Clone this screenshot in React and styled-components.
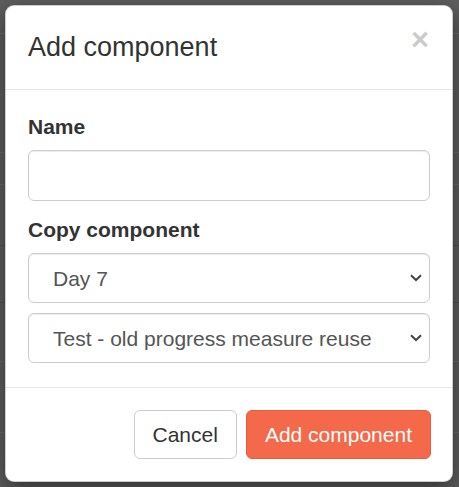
import React from "react"
import styled, { createGlobalStyle } from "styled-components"

const GlobalStyle = createGlobalStyle`
  html, body {
    margin: 0;
    padding: 0;
  }
  body {
    font-family: "Liberation Sans", Arial, Helvetica, sans-serif;
    color: #333;
  }
  * {
    box-sizing: border-box;
  }
`

const rowLines = [
  [33, "#6b6b6b"],
  [152, "#6a6a6a"],
  [184, "#6a6a6a"],
  [245, "#505050"],
  [302, "#505050"],
  [361, "#6a6a6a"],
  [432, "#6a6a6a"],
]

const Backdrop = styled.div`
  width: 459px;
  height: 487px;
  padding: 5px 6px 5px 5px;
  background-color: #5e5e5e;
  background-image: ${rowLines
    .map(([y, c]) => `linear-gradient(to bottom, transparent ${y}px, ${c} ${y}px, ${c} ${y + 1}px, transparent ${y + 1}px)`)
    .join(", ")};
`

const Dialog = styled.div`
  width: 448px;
  background: #fff;
  border: 1px solid rgba(0, 0, 0, 0.2);
  border-radius: 9px;
  box-shadow: 0 7px 22px rgba(0, 0, 0, 0.5);
  overflow: hidden;
`

const Header = styled.div`
  display: flex;
  justify-content: space-between;
  align-items: flex-start;
  padding: 22px 22px;
  border-bottom: 1px solid #e5e5e5;
`

const Title = styled.h4`
  margin: 0;
  font-size: 27px;
  font-weight: 400;
  line-height: 39px;
  color: #333;
`

const Close = styled.button`
  border: 0;
  background: transparent;
  padding: 0;
  margin-top: -4px;
  margin-right: 1px;
  font-family: "Liberation Sans", Arial, sans-serif;
  font-size: 31px;
  font-weight: 700;
  line-height: 1;
  color: #000;
  opacity: 0.2;
  text-shadow: 0 1px 0 #fff;
  cursor: pointer;
`

const Body = styled.div`
  padding: 22px 22px 24px;
`

const Group = styled.div`
  display: flex;
  flex-direction: column;
  gap: ${(p) => p.$gap || 0}px;
  margin-bottom: ${(p) => p.$mb || 0}px;
`

const Label = styled.label`
  display: block;
  font-size: 21px;
  font-weight: 700;
  line-height: 30px;
  margin-bottom: ${(p) => (p.$mb !== undefined ? p.$mb : 8)}px;
  color: #333;
`

const Input = styled.input`
  display: block;
  width: 100%;
  height: 51px;
  padding: 9px 18px;
  font-family: inherit;
  font-size: 21px;
  color: #555;
  background: #fff;
  border: 1px solid #ccc;
  border-radius: 6px;
  box-shadow: inset 0 1px 1px rgba(0, 0, 0, 0.075);
  outline: none;
`

const SelectWrap = styled.div`
  position: relative;
  width: 100%;
  height: 50px;
`

const Select = styled.select`
  appearance: none;
  -webkit-appearance: none;
  display: block;
  width: 100%;
  height: 50px;
  padding: 0 40px 0 24px;
  font-family: inherit;
  font-size: 21px;
  color: #555;
  background: #fff;
  border: 1px solid #ccc;
  border-radius: 6px;
  box-shadow: inset 0 1px 1px rgba(0, 0, 0, 0.075);
  outline: none;
`

const Chevron = styled.svg`
  position: absolute;
  right: 8px;
  top: 50%;
  margin-top: -4px;
  pointer-events: none;
`

const Footer = styled.div`
  display: flex;
  justify-content: flex-end;
  gap: 9px;
  padding: 22px 21px 22px 22px;
  border-top: 1px solid #e5e5e5;
`

const Button = styled.button`
  height: 49px;
  padding: 0 18px;
  font-family: inherit;
  font-size: 21px;
  font-weight: 400;
  border-radius: 6px;
  cursor: pointer;
  color: ${(p) => (p.$primary ? "#fff" : "#333")};
  background: ${(p) => (p.$primary ? "#f3694a" : "#fff")};
  border: 1px solid ${(p) => (p.$primary ? "#ea5a3b" : "#ccc")};
`

function Dropdown({ value }) {
  return (
    <SelectWrap>
      <Select defaultValue={value}>
        <option value={value}>{value}</option>
      </Select>
      <Chevron width="12" height="8" viewBox="0 0 12 8">
        <path d="M1 1.2 L6 6 L11 1.2" fill="none" stroke="#444" strokeWidth="2" />
      </Chevron>
    </SelectWrap>
  )
}

export default function App() {
  return (
    <>
      <GlobalStyle />
      <Backdrop>
        <Dialog>
          <Header>
            <Title>Add component</Title>
            <Close aria-label="Close">×</Close>
          </Header>
          <Body>
            <Group $mb={14}>
              <Label>Name</Label>
              <Input type="text" />
            </Group>
            <Group $gap={10}>
              <Label $mb={-2}>Copy component</Label>
              <Dropdown value="Day 7" />
              <Dropdown value="Test - old progress measure reuse" />
            </Group>
          </Body>
          <Footer>
            <Button>Cancel</Button>
            <Button $primary>Add component</Button>
          </Footer>
        </Dialog>
      </Backdrop>
    </>
  )
}
